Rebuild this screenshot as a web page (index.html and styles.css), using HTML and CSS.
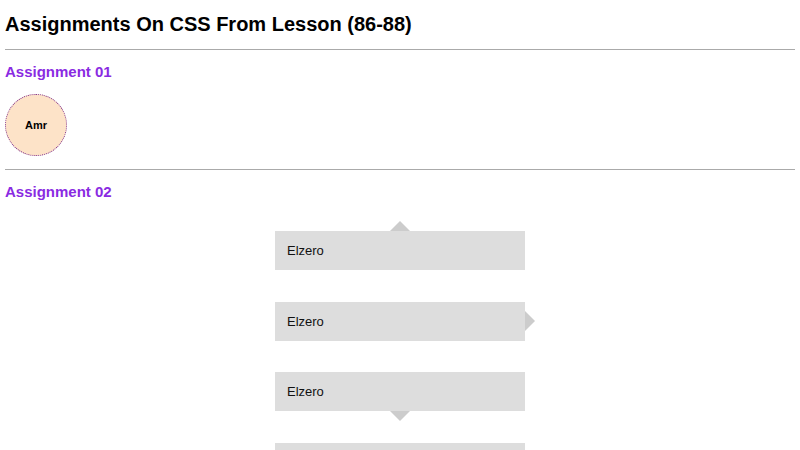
FILE: index.html
```html
<!DOCTYPE html>
<html lang="en">
  <head>
    <meta charset="UTF-8" />
    <meta name="viewport" content="width=device-width, initial-scale=1.0" />
    <title>Assignments On CSS From Lesson (86-88)</title>
    <link rel="stylesheet" href="styles.css">
  </head>
  <body>
    <h1 class="title">Assignments On CSS From Lesson (86-88)</h1>
    <hr />
    <h2 class="sub">Assignment 01</h2>
    <div class="circle">Amr</div>
    <hr />
    <h2 class="sub">Assignment 02</h2>
    <div class="boxes">
      <div class="box top">Elzero</div>
      <div class="box right">Elzero</div>
      <div class="box bottom">Elzero</div>
      <div class="box left">Elzero</div>
    </div>
  </body>
</html>
```

FILE: styles.css
```css
body {
  margin: 0 5px;
  font-family: "Liberation Sans", Arial, sans-serif;
}
hr {
  margin: 0;
  border: none;
  border-top: 1px solid #aaa;
  height: 0;
}
.title {
  font-size: 20px;
  line-height: 23px;
  margin: 0;
  padding: 13px 0 13px;
}
.sub {
  color: blueviolet;
  font-size: 15px;
  line-height: 17px;
  margin: 0;
  padding: 13px 0 14px;
}
.circle {
  width: 60px;
  height: 60px;
  border-radius: 50%;
  background-color: #fde3c8;
  border: 1px dotted #7a2a8a;
  font-size: 11px;
  font-weight: bold;
  display: flex;
  align-items: center;
  justify-content: center;
  margin-bottom: 13px;
}
.boxes {
  display: flex;
  flex-direction: column;
  align-items: center;
  gap: 31.5px;
  padding-top: 17px;
}
.box {
  position: relative;
  width: 238px;
  height: 39px;
  line-height: 39px;
  padding-left: 12px;
  background-color: #ddd;
  color: #111;
  font-size: 13px;
}
.box::after {
  content: "";
  position: absolute;
  border: 10px solid transparent;
}
.top::after {
  border-bottom-color: #ccc;
  bottom: 100%;
  left: 50%;
  margin-left: -10px;
}
.right::after {
  border-left-color: #ccc;
  left: 100%;
  top: 50%;
  margin-top: -10px;
}
.bottom::after {
  border-top-color: #ccc;
  top: 100%;
  left: 50%;
  margin-left: -10px;
}
.left::after {
  border-right-color: #ccc;
  right: 100%;
  top: 50%;
  margin-top: -10px;
}
```
